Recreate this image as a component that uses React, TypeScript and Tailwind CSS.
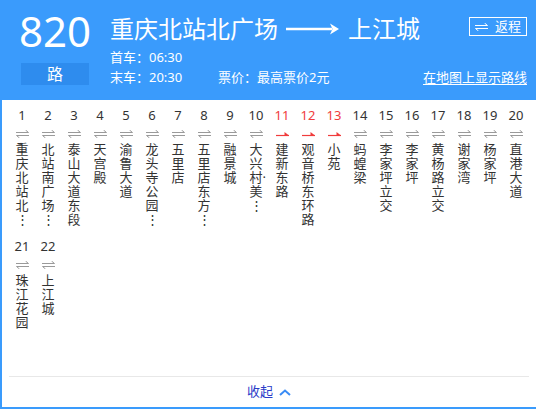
import React from 'react';

interface Stop {
  no: number;
  name: string;
  hot?: boolean;
}

const stops: Stop[] = [
  { no: 1, name: '重庆北站北…' },
  { no: 2, name: '北站南广场…' },
  { no: 3, name: '泰山大道东段' },
  { no: 4, name: '天宫殿' },
  { no: 5, name: '渝鲁大道' },
  { no: 6, name: '龙头寺公园…' },
  { no: 7, name: '五里店' },
  { no: 8, name: '五里店东方…' },
  { no: 9, name: '融景城' },
  { no: 10, name: '大兴村·美…' },
  { no: 11, name: '建新东路', hot: true },
  { no: 12, name: '观音桥东环路', hot: true },
  { no: 13, name: '小苑', hot: true },
  { no: 14, name: '蚂蝗梁' },
  { no: 15, name: '李家坪立交' },
  { no: 16, name: '李家坪' },
  { no: 17, name: '黄杨路立交' },
  { no: 18, name: '谢家湾' },
  { no: 19, name: '杨家坪' },
  { no: 20, name: '直港大道' },
  { no: 21, name: '珠江花园' },
  { no: 22, name: '上江城' },
];

// one glyph per line; a middle dot stays with the char before it
function lines(name: string) {
  const out: string[] = [];
  for (const c of name) {
    if (c === '·' && out.length) out[out.length - 1] += c;
    else out.push(c === '…' ? '⋮' : c);
  }
  return out;
}

function BothWays({ color = '#9a9a9a' }: { color?: string }) {
  return (
    <svg width="13" height="8" viewBox="0 0 13 8" fill="none" stroke={color} strokeWidth="1">
      <path d="M0 2.5H12.5L9.5 0" />
      <path d="M13 5.5H0.5L3.5 8" />
    </svg>
  );
}

function OneWay() {
  return (
    <svg width="13" height="8" viewBox="0 0 13 8">
      <path d="M0 5.5H13" stroke="#f03c3c" strokeWidth="1.2" />
      <path d="M8.5 2L13 5.5H8.5Z" fill="#f03c3c" />
    </svg>
  );
}

function StopCell({ stop }: { stop: Stop }) {
  return (
    <div className="flex flex-col items-center">
      <div className={`h-[20px] text-[13px] leading-[20px] ${stop.hot ? 'text-[#f03c3c]' : 'text-[#333333]'}`}>
        {stop.no}
      </div>
      <div className="mt-[5px] h-[8px] flex">{stop.hot ? <OneWay /> : <BothWays />}</div>
      <div className="mt-[4px] w-[13px] text-[13px] leading-[14px] text-[#333333]">
        {lines(stop.name).map((l, i) => (
          <div key={i} className="whitespace-nowrap">
            {l}
          </div>
        ))}
      </div>
    </div>
  );
}

export default function App() {
  return (
    <div className="w-[536px] h-[409px] bg-white font-['Noto_Sans','Noto_Sans_CJK_SC',sans-serif]">
      <div className="h-[100px] bg-[#3a9bfc] flex text-white">
        <div className="ml-[21px] w-[68px] pt-[10px] flex flex-col items-center">
          <div className="text-[42px] leading-[42px] whitespace-nowrap">820</div>
          <div className="mt-[11px] w-[68px] h-[22px] bg-[#2e8cee] flex items-center justify-center text-[16px]">
            路
          </div>
        </div>
        <div className="flex-1 ml-[21px] pr-[9px]">
          <div className="flex items-start mt-[15px]">
            <div className="flex items-center text-[24px] leading-[28px] whitespace-nowrap">
              <span>重庆北站北广场</span>
              <svg className="ml-[8px]" width="53" height="12" viewBox="0 0 53 12">
                <path d="M0 6H46" stroke="white" strokeWidth="2.4" />
                <path d="M44 0.5L53 6L44 11.5L46.5 6Z" fill="white" />
              </svg>
              <span className="ml-[9px]">上江城</span>
            </div>
            <div className="ml-auto mt-[2px] w-[58px] h-[19px] border border-white flex items-center pl-[5px] text-[13px] leading-[17px]">
              <BothWays color="white" />
              <span className="ml-[7px]">返程</span>
            </div>
          </div>
          <div className="mt-[4px] text-[13px] leading-[20px]">首车：06:30</div>
          <div className="flex text-[13px] leading-[20px]">
            <span className="w-[108px]">末车：20:30</span>
            <span>票价：最高票价2元</span>
            <span className="ml-auto underline underline-offset-2">在地图上显示路线</span>
          </div>
        </div>
      </div>

      <div className="border-l-2 border-b-2 border-[#3a9bfc] h-[309px]">
        <div className="h-[276px] pl-[7px] pt-[5px] grid grid-cols-[repeat(20,26px)] auto-rows-[131px]">
          {stops.map((s) => (
            <StopCell key={s.no} stop={s} />
          ))}
        </div>
        <div className="mx-[7px] h-[31px] border-t border-[#e8e8e8] flex items-center justify-center">
          <span className="text-[13px] text-[#2a3bc8]">收起</span>
          <svg className="ml-[6px]" width="12" height="7" viewBox="0 0 12 7" fill="none">
            <path d="M1 6L6 1.5L11 6" stroke="#3a8cf5" strokeWidth="2" />
          </svg>
        </div>
      </div>
    </div>
  );
}
